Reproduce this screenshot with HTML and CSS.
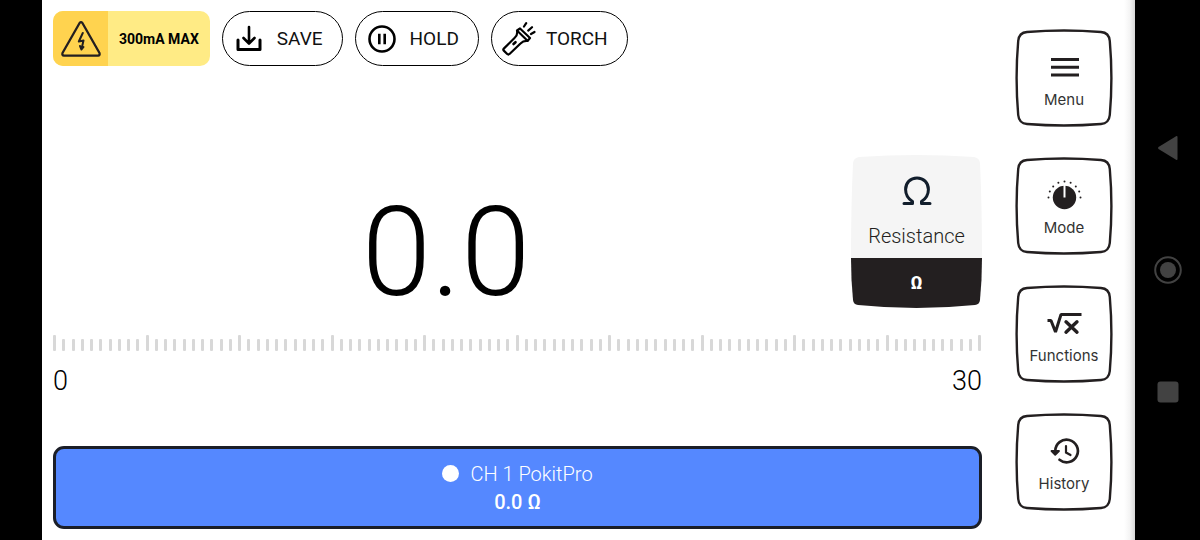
FILE: index.html
```html
<!DOCTYPE html>
<html lang="en">
<head>
    <meta charset="UTF-8">
    <meta name="viewport" content="width=device-width, initial-scale=1.0">
    <title>Pokit Meter</title>
    <link rel="stylesheet" href="styles.css">
</head>
<body>
    <div class="app">
        <main class="meter">
            <div class="toolbar">
                <div class="warning">
                    <div class="warning-icon">
                        <svg width="42" height="36" viewBox="0 0 40 36" fill="none" stroke="#231f20" stroke-width="2.300" stroke-linejoin="round" stroke-linecap="round">
                            <path d="M18.600 2Q20 0.400 21.400 2L38.500 32Q39.200 34.400 37 34.600H3Q0.800 34.400 1.500 32Z"/>
                            <path d="M21.800 12L17.800 20.500L22.500 19.500L20.500 28M19 25L20.500 28.500L22.500 26" stroke-width="2"/>
                        </svg>
                    </div>
                    <span class="warning-text">300mA MAX</span>
                </div>
                <button class="pill" type="button">
                    <svg width="28" height="28" viewBox="0 0 28 28" fill="none" stroke="#000" stroke-width="2.600" stroke-linecap="round" stroke-linejoin="round">
                        <path d="M14 2V18M8.500 13L14 18.500L19.500 13"/>
                        <path d="M3 15V24.500H25V15" stroke-width="3"/>
                    </svg>
                    <span>SAVE</span>
                </button>
                <button class="pill" type="button">
                    <svg width="28" height="28" viewBox="0 0 28 28" fill="none" stroke="#000" stroke-width="2.600">
                        <circle cx="14" cy="14" r="12.500"/>
                        <path d="M11.300 8.800V19.200M16.700 8.800V19.200"/>
                    </svg>
                    <span>HOLD</span>
                </button>
                <button class="pill pill-torch" type="button">
                    <svg width="34" height="34" viewBox="0 0 34 34" fill="none" stroke="#000" stroke-width="2.200" stroke-linecap="round" stroke-linejoin="round">
                        <path d="M15 8.500L18 6.500L28 16L25.500 19Q21.500 18.500 18.500 21.500L7.500 32Q6.300 33 5.200 32L1.800 28.600Q0.800 27.600 1.800 26.600L12.500 16Q16 13 15 8.500Z"/>
                        <path d="M15.500 9L25.500 18.700"/>
                        <path d="M11.500 22L13.500 20.200" stroke-width="2.600"/>
                        <path d="M22 4.500L24.200 1.200M26.200 8.600L30 5.200M29 12L32.500 10"/>
                    </svg>
                    <span>TORCH</span>
                </button>
            </div>

            <div class="readout">
                <output class="value">0.0</output>
                <div class="mode-card">
                    <svg class="card-shape" viewBox="0 0 130 153" preserveAspectRatio="none">
                        <path fill="#f5f5f5" d="M0 103Q0 50 2 8Q2.500 3 8 2Q65 -2 122 2Q127.500 3 128 8Q130 50 130 103Z"/>
                        <path fill="#231f20" d="M0 103H130Q130 125 128 145Q127.500 149.500 123 150Q65 156 7 150Q2.500 149.500 2 145Q0 125 0 103Z"/>
                    </svg>
                    <div class="mode-top">
                        <svg width="30" height="30" viewBox="0 0 30 30" fill="none" stroke="#121e2c" stroke-width="3" stroke-linecap="round" stroke-linejoin="round">
                            <path d="M2 27.500H10.500V25.500C5.800 22.500 3.600 18.500 3.600 13.500C3.600 6.500 8.500 2 15 2S26.400 6.500 26.400 13.500C26.400 18.500 24.200 22.500 19.500 25.500V27.500H28"/>
                        </svg>
                        <span>Resistance</span>
                    </div>
                    <div class="mode-unit">Ω</div>
                </div>
            </div>

            <div class="scale">
                <div class="ticks" id="ticks"></div>
                <div class="scale-labels">
                    <span>0</span>
                    <span>30</span>
                </div>
            </div>

            <button class="channel" type="button">
                <span class="channel-name"><span class="dot"></span>CH 1 PokitPro</span>
                <span class="channel-value">0.0 Ω</span>
            </button>
        </main>

        <nav class="side">
            <button class="key" type="button">
                <svg class="key-shape" viewBox="0 0 98 98"><path d="M12 3Q49 0 86 3Q94 3.500 94.800 12Q98 49 94.800 86Q94 94.500 86 95Q49 98 12 95Q4 94.500 3.200 86Q0 49 3.200 12Q4 3.500 12 3Z"/></svg>
                <svg class="key-icon" viewBox="0 0 36 36" fill="none" stroke="#231f20" stroke-width="3">
                    <path d="M5 10.500H33M5 18.200H33M5 26H33"/>
                </svg>
                <span>Menu</span>
            </button>
            <button class="key" type="button">
                <svg class="key-shape" viewBox="0 0 98 98"><path d="M12 3Q49 0 86 3Q94 3.500 94.800 12Q98 49 94.800 86Q94 94.500 86 95Q49 98 12 95Q4 94.500 3.200 86Q0 49 3.200 12Q4 3.500 12 3Z"/></svg>
                <svg class="key-icon" viewBox="0 0 36 36" fill="#231f20">
                    <circle cx="18.500" cy="20.500" r="11.700"/>
                    <path d="M18.500 8V20.500" stroke="#fff" stroke-width="2"/>
                    <circle cx="2.500" cy="20.500" r="1"/>
                    <circle cx="3.800" cy="14.500" r="1"/>
                    <circle cx="7.200" cy="9.500" r="1"/>
                    <circle cx="12.400" cy="5.700" r="1"/>
                    <circle cx="18.500" cy="4.500" r="1"/>
                    <circle cx="24.600" cy="5.700" r="1"/>
                    <circle cx="29.800" cy="9.500" r="1"/>
                    <circle cx="33.200" cy="14.500" r="1"/>
                    <circle cx="34.500" cy="20.500" r="1"/>
                </svg>
                <span>Mode</span>
            </button>
            <button class="key" type="button">
                <svg class="key-shape" viewBox="0 0 98 98"><path d="M12 3Q49 0 86 3Q94 3.500 94.800 12Q98 49 94.800 86Q94 94.500 86 95Q49 98 12 95Q4 94.500 3.200 86Q0 49 3.200 12Q4 3.500 12 3Z"/></svg>
                <svg class="key-icon" viewBox="0 0 36 36" fill="none" stroke="#231f20" stroke-width="3">
                    <path d="M1.500 15.500H5L9.500 27L15 9.500H35.500" stroke-linejoin="bevel"/>
                    <path d="M20 16.800L31 27.200M31 16.800L20 27.200" stroke-width="3.400" stroke-linecap="round"/>
                </svg>
                <span>Functions</span>
            </button>
            <button class="key" type="button">
                <svg class="key-shape" viewBox="0 0 98 98"><path d="M12 3Q49 0 86 3Q94 3.500 94.800 12Q98 49 94.800 86Q94 94.500 86 95Q49 98 12 95Q4 94.500 3.200 86Q0 49 3.200 12Q4 3.500 12 3Z"/></svg>
                <svg class="key-icon" viewBox="0 0 36 36" fill="none" stroke="#231f20" stroke-width="2.700" stroke-linecap="round">
                    <path d="M9.300 18A11.300 11.300 0 1 1 13.500 26.800"/>
                    <path d="M20 13V19.500L24.500 22" stroke-width="2.200"/>
                    <path d="M5.500 18H13L9.200 21.800Z" fill="#231f20" stroke-width="1.800" stroke-linejoin="round"/>
                </svg>
                <span>History</span>
            </button>
        </nav>
    </div>

    <div class="system-bar">
        <button type="button" aria-label="Back">
            <svg width="28" height="28" viewBox="0 0 28 28" fill="#424242"><path d="M4.500 13Q3.500 14 4.500 15L22.500 26Q23.500 26.200 23.500 25V3Q23.500 1.800 22.500 2Z"/></svg>
        </button>
        <button type="button" aria-label="Home">
            <svg width="28" height="28" viewBox="0 0 28 28"><circle cx="14" cy="14" r="12.800" fill="none" stroke="#424242" stroke-width="2"/><circle cx="14" cy="14" r="8" fill="#424242"/></svg>
        </button>
        <button type="button" aria-label="Recent apps">
            <svg width="28" height="28" viewBox="0 0 28 28" fill="#424242"><rect x="3.500" y="3.500" width="21" height="21" rx="3"/></svg>
        </button>
    </div>

    <script>
        const ticks = document.getElementById('ticks');
        for (let i = 0; i <= 100; i++) {
            const tick = document.createElement('i');
            tick.className = i % 10 === 0 ? 'tick major' : 'tick';
            ticks.appendChild(tick);
        }
    </script>
</body>
</html>
```
FILE: styles.css
```css
* {
    box-sizing: border-box;
}
body {
    margin: 0;
    padding-left: 42px;
    min-height: 100vh;
    display: flex;
    background-color: #000;
    color: #000;
    font-family: Roboto, "Liberation Sans", sans-serif;
}
button {
    padding: 0;
    border: none;
    background: none;
    color: inherit;
    font-family: inherit;
    cursor: pointer;
}
.app {
    flex: 1;
    display: flex;
    gap: 33px;
    padding: 0 22px 0 11px;
    background: linear-gradient(to left, #d8d8d8, #f4f4f4 5px, #fff 11px);
}
.meter {
    flex: 1;
    display: flex;
    flex-direction: column;
    padding: 11px 0;
}

/* toolbar */
.toolbar {
    display: flex;
    gap: 12px;
}
.warning {
    display: flex;
    height: 55px;
    border-radius: 10px;
    overflow: hidden;
    background-color: #ffeb85;
}
.warning-icon {
    display: flex;
    align-items: center;
    justify-content: center;
    width: 55px;
    background-color: #ffd34f;
}
.warning-text {
    align-self: center;
    padding: 0 11px;
    font-size: 14px;
    font-weight: 700;
}
.pill {
    display: flex;
    align-items: center;
    gap: 14px;
    height: 55px;
    padding: 0 19px 0 12px;
    border: 1px solid #000;
    border-radius: 28px;
    background-color: #fff;
    color: #111;
    font-size: 19px;
}
.pill-torch {
    gap: 10px;
    padding-left: 10px;
}

/* reading and mode card */
.readout {
    display: flex;
    align-items: center;
    gap: 12px;
    margin-top: auto;
}
.value {
    flex: 1;
    padding-top: 42px;
    text-align: center;
    font-size: 125px;
    font-weight: 300;
    line-height: 111px;
}
.mode-card {
    position: relative;
    width: 131px;
    text-align: center;
}
.card-shape {
    position: absolute;
    inset: 0;
    width: 100%;
    height: 100%;
}
.mode-top {
    position: relative;
    display: flex;
    flex-direction: column;
    align-items: center;
    gap: 18px;
    height: 103px;
    padding-top: 21px;
    color: #231f20;
    font-size: 20px;
    font-weight: 300;
    line-height: 24px;
}
.mode-unit {
    position: relative;
    height: 50px;
    color: #fff;
    font-size: 18px;
    font-weight: 700;
    line-height: 50px;
}

/* scale */
.scale {
    margin: 27px 0 49px;
}
.ticks {
    display: flex;
    justify-content: space-between;
    align-items: flex-end;
    height: 16px;
}
.tick {
    width: 3px;
    height: 12px;
    border-radius: 1px;
    background-color: #d8d8d8;
}
.major {
    height: 16px;
}
.scale-labels {
    display: flex;
    justify-content: space-between;
    padding-top: 14px;
    font-size: 27px;
    font-weight: 300;
    line-height: 32px;
}

/* channel */
.channel {
    display: flex;
    flex-direction: column;
    align-items: center;
    justify-content: center;
    gap: 4px;
    height: 83px;
    border: 3px solid #1b1e27;
    border-radius: 11px;
    background-color: #5588ff;
    color: #fff;
    font-size: 20px;
    line-height: 24px;
}
.channel-name {
    display: flex;
    align-items: center;
    gap: 11px;
    font-weight: 300;
}
.dot {
    width: 17px;
    height: 17px;
    border-radius: 50%;
    background-color: #fff;
}
.channel-value {
    font-weight: 500;
}

/* side keys */
.side {
    display: flex;
    flex-direction: column;
    justify-content: center;
    gap: 30px;
}
.key {
    position: relative;
    display: flex;
    flex-direction: column;
    align-items: center;
    width: 98px;
    height: 98px;
    padding-top: 20px;
    color: #333;
    font-family: Inter, "Noto Sans", sans-serif;
    font-size: 15px;
    line-height: 20px;
}
.key-shape {
    position: absolute;
    inset: 0;
    fill: #fff;
    stroke: #231f20;
    stroke-width: 2.4px;
}
.key-icon {
    position: relative;
    width: 36px;
    height: 36px;
    margin-bottom: 5px;
}
.key span {
    position: relative;
}

/* phone navigation */
.system-bar {
    display: flex;
    flex-direction: column;
    align-items: center;
    justify-content: center;
    gap: 94px;
    width: 65px;
}
.system-bar svg {
    display: block;
}
```
